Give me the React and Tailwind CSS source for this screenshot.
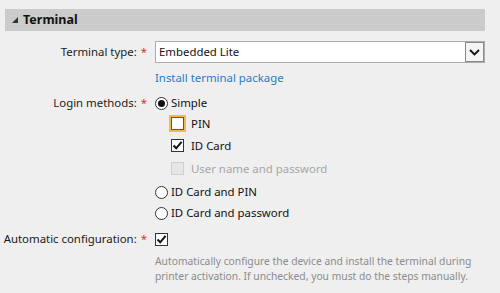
import React from "react";

const font = { fontFamily: '"Noto Sans", "Open Sans", sans-serif' };

function Radio({ checked }) {
  return (
    <span className="flex h-[13px] w-[13px] shrink-0 items-center justify-center rounded-full border border-[#333333] bg-white">
      {checked && <span className="h-[7px] w-[7px] rounded-full bg-[#111111]" />}
    </span>
  );
}

function Check({ checked, disabled, focus }) {
  if (focus) {
    return (
      <span className="flex h-[17px] w-[17px] shrink-0 items-center justify-center border-2 border-[#f5b850]">
        <span className="flex h-[13px] w-[13px] border border-[#555555] bg-white" />
      </span>
    );
  }
  return (
    <span
      className={
        "flex h-[13px] w-[13px] shrink-0 items-center justify-center border " +
        (disabled ? "border-[#cfcfcf] bg-[#e6e6e6]" : "border-[#333333] bg-white")
      }
    >
      {checked && (
        <svg width="11" height="11" viewBox="0 0 11 11">
          <path d="M1.5 5.5 L4.2 8.3 L9.6 1.8" fill="none" stroke="#111" strokeWidth="2" />
        </svg>
      )}
    </span>
  );
}

function Label({ children, h }) {
  return (
    <div className={"flex items-center justify-end self-start whitespace-nowrap pr-[1px] text-[#1a1a1a] " + h}>
      {children}
      <span className="ml-[4px] text-[#e0302c]">*</span>
    </div>
  );
}

export default function App() {
  return (
    <div className="h-[293px] w-[500px] overflow-hidden bg-[#efefef] pt-[9px] text-[11.4px] leading-none" style={font}>
      <div className="ml-[5px] flex h-[22px] w-[480px] items-center bg-[#cbcbcb] pl-[7px]">
        <svg width="6" height="6" viewBox="0 0 6 6" className="mr-[5px]">
          <path d="M6 0 L6 6 L0 6 Z" fill="#333" />
        </svg>
        <span className="text-[12.5px] font-bold text-[#111111]">Terminal</span>
      </div>

      <div className="mt-[10px] grid grid-cols-[148px_1fr] gap-x-[7px]">
        <Label h="h-[22px]">Terminal type:</Label>
        <div className="flex h-[22px] w-[330px] items-center border border-[#acacac] bg-white">
          <span className="flex-1 pl-[3px] text-[#111111]">Embedded Lite</span>
          <span className="flex h-[20px] w-[19px] items-center justify-center border border-[#8a8a8a] bg-[#f4f4f4]">
            <svg width="11" height="7" viewBox="0 0 11 7">
              <path d="M1 1 L5.5 5.5 L10 1" fill="none" stroke="#111" strokeWidth="1.8" />
            </svg>
          </span>
        </div>

        <div />
        <div className="flex h-[30px] items-center text-[#2b7bbf]">Install terminal package</div>

        <Label h="h-[20px]">Login methods:</Label>
        <div className="flex flex-col">
          <div className="flex h-[20px] items-center">
            <Radio checked />
            <span className="ml-[3px] text-[#111111]">Simple</span>
          </div>
          <div className="flex h-[21px] items-center pl-[14px]">
            <Check focus />
            <span className="ml-[5px] text-[#111111]">PIN</span>
          </div>
          <div className="flex h-[23px] items-center pl-[16px]">
            <Check checked />
            <span className="ml-[7px] text-[#111111]">ID Card</span>
          </div>
          <div className="flex h-[23px] items-center pl-[16px]">
            <Check disabled />
            <span className="ml-[7px] text-[#a6a6a6]">User name and password</span>
          </div>
          <div className="flex h-[22px] items-center pt-[2px]">
            <Radio />
            <span className="ml-[3px] text-[#111111]">ID Card and PIN</span>
          </div>
          <div className="flex h-[22px] items-center">
            <Radio />
            <span className="ml-[3px] text-[#111111]">ID Card and password</span>
          </div>
        </div>

        <div className="col-span-2 h-[5px]" />

        <Label h="h-[20px]">Automatic configuration:</Label>
        <div className="flex h-[20px] items-center">
          <Check checked />
        </div>

        <div />
        <div className="whitespace-nowrap pt-[5px] text-[10.3px] leading-[15px] text-[#8c8c8c]">
          Automatically configure the device and install the terminal during
          <br />
          printer activation. If unchecked, you must do the steps manually.
        </div>
      </div>
    </div>
  );
}
